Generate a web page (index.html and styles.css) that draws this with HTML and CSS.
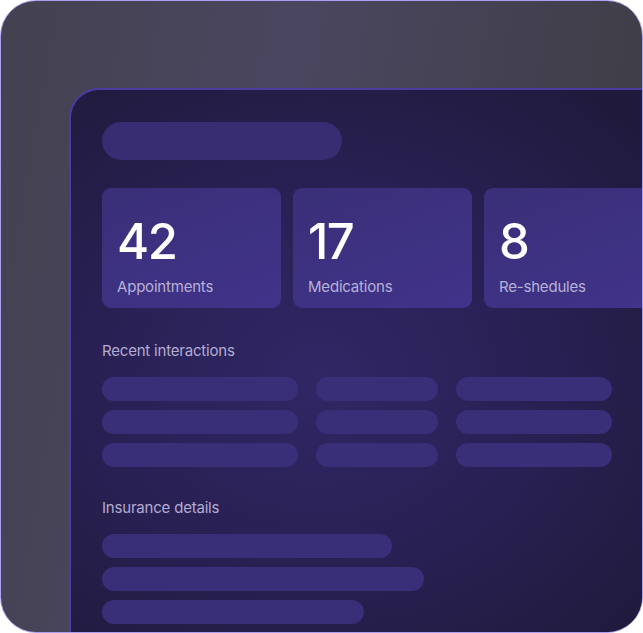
FILE: index.html
```html
<!DOCTYPE html>
<html lang="en">
<head>
    <meta charset="UTF-8">
    <meta name="viewport" content="width=device-width, initial-scale=1.0">
    <title>Patient Dashboard</title>
    <link rel="stylesheet" href="styles.css">
</head>
<body>
    <div class="frame">
        <div class="panel">
            <div class="title-pill"></div>

            <div class="stats">
                <div class="stat">
                    <div class="stat-num">42</div>
                    <div class="stat-label">Appointments</div>
                </div>
                <div class="stat">
                    <div class="stat-num">17</div>
                    <div class="stat-label">Medications</div>
                </div>
                <div class="stat">
                    <div class="stat-num">8</div>
                    <div class="stat-label">Re-shedules</div>
                </div>
            </div>

            <h2 class="section-title">Recent interactions</h2>
            <div class="interactions">
                <div class="bar"></div><div class="bar"></div><div class="bar"></div>
                <div class="bar"></div><div class="bar"></div><div class="bar"></div>
                <div class="bar"></div><div class="bar"></div><div class="bar"></div>
            </div>

            <h2 class="section-title insurance-title">Insurance details</h2>
            <div class="insurance">
                <div class="bar" style="width: 290px"></div>
                <div class="bar" style="width: 322px"></div>
                <div class="bar" style="width: 262px"></div>
            </div>
        </div>
    </div>
</body>
</html>
```

FILE: styles.css
```css
body {
    margin: 0;
    padding: 0;
    background: #fff;
    font-family: Inter, "Noto Sans", sans-serif;
}
.frame {
    box-sizing: border-box;
    width: 643px;
    height: 633px;
    border: 1px solid #ab9ff2;
    border-radius: 36px;
    overflow: hidden;
    padding: 87px 0 0 68px;
    background: linear-gradient(100deg, #444150 0%, #4a4660 40%, #3f3e46 90%);
}
.panel {
    box-sizing: border-box;
    width: 620px;
    height: 600px;
    border-top: 2px solid #4a3ca0;
    border-left: 2px solid #4a3ca0;
    border-top-left-radius: 30px;
    padding: 32px 0 0 31px;
    background: radial-gradient(ellipse at 40% 48%, #302765 0%, #282052 45%, #1f1a3b 85%);
}
.title-pill {
    width: 240px;
    height: 38px;
    border-radius: 19px;
    background: #382d72;
    margin-bottom: 28px;
}
.stats {
    display: flex;
    gap: 12px;
}
.stat {
    flex: 0 0 179px;
    box-sizing: border-box;
    height: 120px;
    border-radius: 9px;
    padding: 30px 0 0 15px;
    background: linear-gradient(160deg, #3a2f78 0%, #40338a 100%);
}
.stat-num {
    font-size: 49px;
    line-height: 48px;
    font-weight: 500;
    color: #fff;
    letter-spacing: -1.5px;
}
.stat-label {
    margin-top: 11px;
    font-size: 15px;
    line-height: 20px;
    color: #b7b0d8;
    letter-spacing: -0.2px;
}
.section-title {
    margin: 33px 0 16px;
    font-size: 15px;
    line-height: 20px;
    font-weight: 400;
    color: #b3acd2;
    letter-spacing: -0.2px;
}
.insurance-title {
    margin-top: 31px;
}
.interactions {
    display: grid;
    grid-template-columns: 196px 122px 156px;
    column-gap: 18px;
    row-gap: 9px;
}
.insurance {
    display: flex;
    flex-direction: column;
    gap: 9px;
}
.bar {
    height: 24px;
    border-radius: 12px;
    background: #392e78;
}
```
